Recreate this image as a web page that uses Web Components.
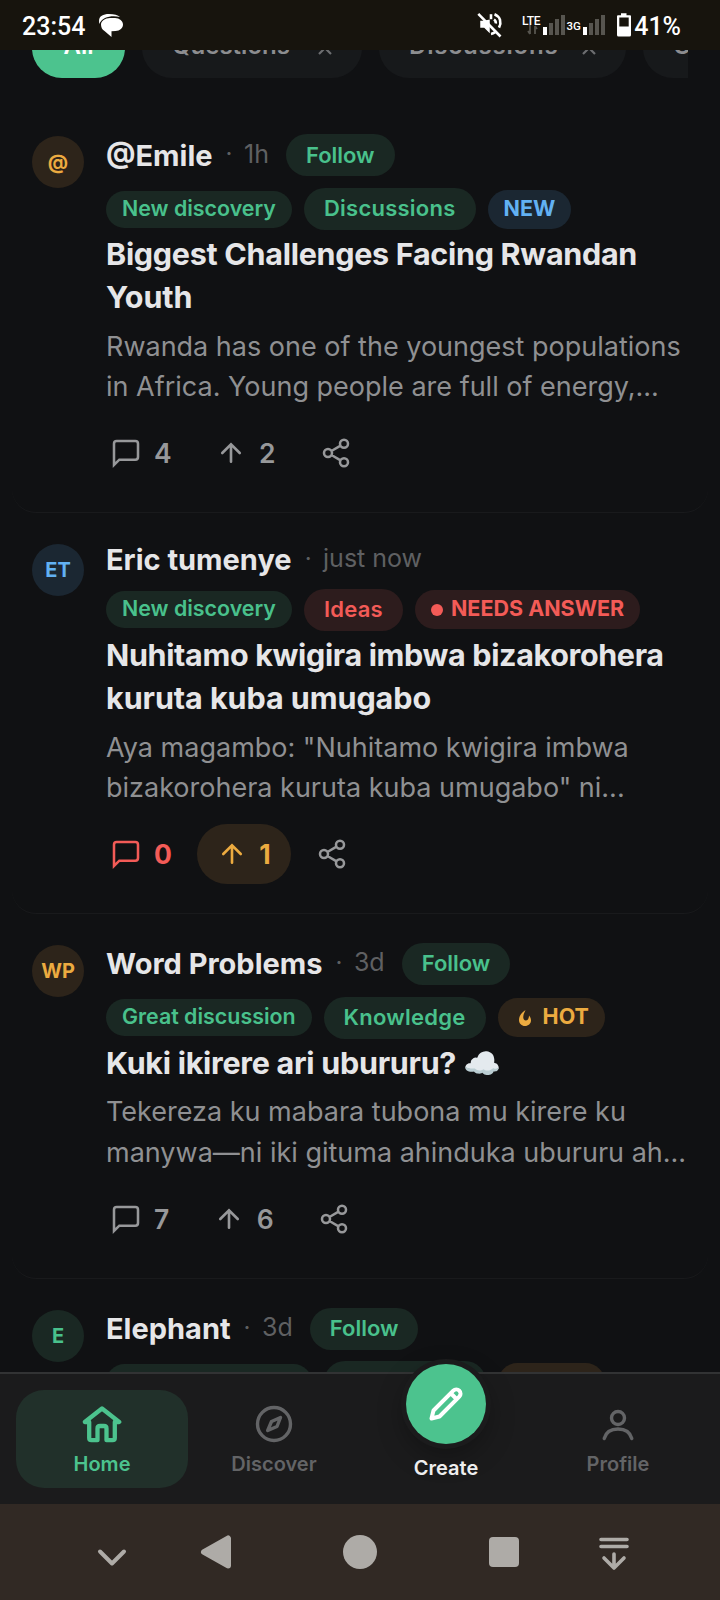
<!DOCTYPE html>
<html lang="rw">
<head>
<meta charset="utf-8">
<title>Community feed</title>
<style>
html,body{margin:0;background:#101113}
body{font-family:Inter,"Liberation Sans",sans-serif;color:#e6e6e8}
</style>
</head>
<body>
<app-shell>
  <status-bar slot="status" time="23:54" battery="41%"></status-bar>
  <chip-row>
    <filter-chip active style="width:93px">All</filter-chip>
    <filter-chip closable style="width:220px">Questions</filter-chip>
    <filter-chip closable style="width:247px;letter-spacing:.8px">Discussions</filter-chip>
    <filter-chip closable style="width:220px">Guides</filter-chip>
  </chip-row>
  <post-card initials="@" tone="amber" name="@Emile" time="1h" follow comments="4" votes="2">
    <tag-pill slot="tags" size="s">New discovery</tag-pill>
    <tag-pill slot="tags" size="l">Discussions</tag-pill>
    <tag-pill slot="tags" size="m" tone="blue">NEW</tag-pill>
    <span slot="title"><text-line track="-.29">Biggest Challenges Facing Rwandan</text-line><text-line track="-.1">Youth</text-line></span>
    <span slot="excerpt"><text-line>Rwanda has one of the youngest populations</text-line><text-line>in Africa. Young people are full of energy,...</text-line></span>
  </post-card>
  <post-card initials="ET" tone="blue" name="Eric tumenye" time="just now" comments="0" votes="1" urgent voted>
    <tag-pill slot="tags" size="s">New discovery</tag-pill>
    <tag-pill slot="tags" size="l" tone="red">Ideas</tag-pill>
    <tag-pill slot="tags" size="m" tone="red" icon="dot">NEEDS ANSWER</tag-pill>
    <span slot="title"><text-line track="-.35">Nuhitamo kwigira imbwa bizakorohera</text-line><text-line track="-.06">kuruta kuba umugabo</text-line></span>
    <span slot="excerpt"><text-line>Aya magambo: "Nuhitamo kwigira imbwa</text-line><text-line>bizakorohera kuruta kuba umugabo" ni...</text-line></span>
  </post-card>
  <post-card initials="WP" tone="amber" name="Word Problems" time="3d" follow comments="7" votes="6">
    <tag-pill slot="tags" size="s">Great discussion</tag-pill>
    <tag-pill slot="tags" size="l">Knowledge</tag-pill>
    <tag-pill slot="tags" size="m" tone="amber" icon="flame">HOT</tag-pill>
    <span slot="title"><text-line track="-.28">Kuki ikirere ari ubururu? ☁️</text-line></span>
    <span slot="excerpt"><text-line>Tekereza ku mabara tubona mu kirere ku</text-line><text-line>manywa—ni iki gituma ahinduka ubururu ah...</text-line></span>
  </post-card>
  <post-card initials="E" tone="green" name="Elephant" time="3d" follow comments="5" votes="3">
    <tag-pill slot="tags" size="s">Great discussion</tag-pill>
    <tag-pill slot="tags" size="l">Knowledge</tag-pill>
    <tag-pill slot="tags" size="m" tone="amber" icon="flame">HOT</tag-pill>
  </post-card>
  <bottom-nav slot="nav"></bottom-nav>
  <system-bar slot="system"></system-bar>
</app-shell>
<script>
const define=(name,html,setup)=>{
  const t=document.createElement('template');t.innerHTML=html;
  customElements.define(name,class extends HTMLElement{
    constructor(){super();this.attachShadow({mode:'open'}).append(t.content.cloneNode(true));}
    connectedCallback(){if(setup)setup(this,this.shadowRoot,n=>this.getAttribute(n));}
  });
};

define('app-shell',`<style>
:host{display:flex;flex-direction:column;width:720px;height:1600px;overflow:hidden;background:#101113}
main{flex:1;min-height:0;overflow:hidden}
</style><slot name="status"></slot><main><slot></slot></main><slot name="nav"></slot><slot name="system"></slot>`);

define('status-bar',`<style>
:host{display:flex;align-items:center;height:50px;box-sizing:border-box;padding:3px 39px 0 22px;background:#17140d;color:#fff;font:500 25px/50px Roboto,sans-serif;flex:none}
#b{margin:-2px 0 0 13px}.sp{flex:1}
svg{display:block;flex:none}
#s{margin-top:-5px}#p{margin-left:-23px}
</style><span id="t"></span>
<svg id="b" width="26" height="26" viewBox="0 0 26 26"><path fill="#fff" d="M1.500 11C-.5 4 4 1 11 1c5 0 9 1 11 3-5-1.500-11-1-15 1-3 1.500-5 3.500-5.500 6z"/><path fill="#fff" d="M12 5h5c4.500 0 8 3 8 6.500S22 18 17.500 18l-4 0.300 0 5.700L6.500 18C4 16.500 3 14 3 11.500 3 8 7 5 12 5z"/></svg>
<span class="sp"></span>
<svg id="s" width="180" height="30" viewBox="0 0 180 30" fill="none">
 <g stroke="#fff" stroke-width="2.600"><path d="M1.300 4.800 23.500 27.500"/><path fill="#fff" d="M4 12.500h3l5-1v11l-4.500-4.500H4z" stroke-width="1.500"/><path d="M14 5.200v5"/><path d="M17.500 5.200c6 2.500 7.200 8.300 4.500 13.500"/><path d="M14 25c1.500-.300 3-1 4.200-1.800"/><path d="M17 10.500c1.500 1 2 2.500 1.800 4"/></g>
 <text x="45" y="16" font-family="Roboto" font-weight="500" font-size="12" textLength="18.500" fill="#fff">LTE</text>
 <path d="M53 16v9M51 22l2 3M58 25v-8M60 20l-2-3" stroke="#57554f" stroke-width="1.800"/>
 <rect x="66" y="18" width="4" height="8" fill="#fff"/><g fill="#57554f"><rect x="72" y="14" width="4" height="12"/><rect x="78" y="10" width="4" height="16"/><rect x="84" y="6" width="4" height="20"/></g>
 <text x="89.500" y="21" font-family="Roboto" font-weight="500" font-size="11.500" fill="#fff">3G</text>
 <rect x="106" y="18" width="4" height="8" fill="#fff"/><g fill="#57554f"><rect x="112" y="14" width="4" height="12"/><rect x="118" y="10" width="4" height="16"/><rect x="124" y="6" width="4" height="20"/></g>
 <path fill="#fff" fill-rule="evenodd" d="M144 4.300h5.500v2h3.500q1 0 1 1V26q0 1.500-1.500 1.500h-11q-1.500 0-1.500-1.500V7.300q0-1 1-1H144zM142.300 8.500v9h9.400v-9z"/>
</svg><span id="p"></span>`,(el,r,a)=>{r.getElementById('t').textContent=a('time');r.getElementById('p').textContent=a('battery');});

define('chip-row',`<style>
:host{display:flex;gap:17px;margin:-32px 32px 27.400px;overflow:hidden;height:60px}
</style><slot></slot>`);
define('filter-chip',`<style>
:host{display:flex;flex:none;box-sizing:border-box;justify-content:center;align-items:center;height:60px;border-radius:30px;background:#17191b;color:#8c8d90;font-weight:600;font-size:24px;padding-bottom:5px}
:host([active]){background:#4cc38e;color:#fff}
svg{display:none}:host([closable]) svg{display:block;margin-top:4px}
:host([closable]){justify-content:space-between;padding-left:30px;padding-right:30px}
</style><slot></slot><svg width="14" height="14" viewBox="0 0 14 14" stroke="#6c6d70" stroke-width="2.200"><path d="M1 1l12 12M13 1 1 13"/></svg>`);

define('text-line',`<style>:host{display:block;white-space:nowrap}</style><slot></slot>`,(el,r,a)=>{if(a('track'))el.style.letterSpacing=a('track')+'px';});

define('tag-pill',`<style>
:host{display:inline-flex;align-items:center;box-sizing:border-box;border-radius:21px;background:#1a2823;color:#49c18c;font-weight:600;font-size:22px;white-space:nowrap;flex:none}
:host([size=s]){height:37px;padding:0 16px 3px;font-size:21.400px}
:host([size=m]){height:39px;padding:0 16px 3px;font-weight:700;font-size:21.500px}
:host([size=l]){height:42px;padding:0 20px 1.500px;letter-spacing:.25px}
:host([plain]){letter-spacing:0}
:host([tone=blue]){background:#1b2732;color:#62b1f3}
:host([tone=red]){background:#2d1c1d;color:#f35b57}
:host([tone=amber]){background:#2d241a;color:#ecab40}
svg{display:none;flex:none}
:host([icon=dot]) .dot,:host([icon=flame]) .flame{display:block}
.dot{margin:3px 8px 0 0}.flame{margin:3px 9px 0 2px}
</style><svg class="dot" width="12" height="12"><circle cx="6" cy="6" r="6" fill="currentColor"/></svg>
<svg class="flame" width="18" height="18" viewBox="0 0 18 18"><path fill="currentColor" d="M9.500 1C4.500 4 3 8 3 11c0 3.500 2.700 6 6 6s6-2.500 6-5.500c0-2-.8-3.700-2-5 0 3.500-1.500 5-3.200 5C8 11.500 7 10 7.300 7.500 7.500 5 8.500 3.500 9.500 1z"/></svg><slot></slot>`);

define('user-avatar',`<style>
:host{display:flex;flex:none;width:52px;height:52px;border-radius:50%;align-items:center;justify-content:center;font-weight:700;font-size:20px;background:#1a2823;color:#49c18c}
:host([tone=blue]){background:#1b2732;color:#62b1f3}
:host([tone=amber]){background:#2d241a;color:#ecab40}
</style><slot></slot>`);

const paths={
 comment:'M21 15a2 2 0 0 1-2 2H7l-4 4V5a2 2 0 0 1 2-2h14a2 2 0 0 1 2 2z',
 up:'M12 19V5M5 12l7-7 7 7',
 share:'M8.600 13.500l6.800 4M15.400 6.500l-6.800 4M18 8a3 3 0 1 0 0-6 3 3 0 0 0 0 6zM6 15a3 3 0 1 0 0-6 3 3 0 0 0 0 6zM18 22a3 3 0 1 0 0-6 3 3 0 0 0 0 6z'
};
define('action-button',`<style>
:host{display:flex;align-items:center;box-sizing:border-box;height:60px;padding:0 20px;border-radius:30px;gap:12px;color:#97989a;font-weight:600;font-size:26.500px;flex:none}
:host([tone=red]){color:#f35b57;font-weight:700}
:host([tone=amber]){background:#2d241a;color:#ecab40;font-weight:700}
:host([icon=up]){gap:12.600px}
svg{display:block}
</style><svg viewBox="0 0 24 24" fill="none" stroke="currentColor" stroke-width="1.900"><path/></svg><slot></slot>`,(el,r,a)=>{
 const s=r.querySelector('svg'),k=a('icon'),z=k==='up'?30:32;
 s.setAttribute('width',z);s.setAttribute('height',z);
 r.querySelector('path').setAttribute('d',paths[k]);
 if(k==='up'){s.setAttribute('stroke-linecap','round');s.setAttribute('stroke-width','2.100');}
});

define('post-card',`<style>
:host{display:flex;gap:22px;box-sizing:border-box;margin:0 12px;padding:29px 20px;border-bottom:1px solid #191a1c;border-radius:24px}
user-avatar{margin-top:2px}
.c{flex:1;min-width:0}
.n{display:flex;align-items:center;min-height:35px}
b{font-weight:700;font-size:29px;line-height:35px}
.d{color:#5f6062;font-size:24px;margin:-3px 11px 0 13px}
.t{color:#5f6062;font-size:25px;margin:-3px 17px 0 .500px}
.tags{display:flex;align-items:center;gap:12px;margin-top:11.800px;height:42px}
.title{font-weight:700;font-size:30.500px;line-height:43.200px;margin-top:2px}
.ex{color:#8f9092;font-size:27px;line-height:40.300px;margin-top:8.500px}
.a{display:flex;gap:4.800px;margin:15.500px 0 0 -16px}
</style><user-avatar></user-avatar><div class="c">
<div class="n"><b></b><span class="d">·</span><span class="t"></span></div>
<div class="tags"><slot name="tags"></slot></div>
<div class="title"><slot name="title"></slot></div>
<div class="ex"><slot name="excerpt"></slot></div>
<div class="a"><action-button class="cm" icon="comment"></action-button><action-button class="up" icon="up"></action-button><action-button icon="share"></action-button></div>
</div>`,(el,r,a)=>{
 const q=s=>r.querySelector(s);
 const av=q('user-avatar');av.textContent=a('initials');av.setAttribute('tone',a('tone'));
 q('b').textContent=a('name');q('.t').textContent=a('time');
 q('.cm').append(a('comments'));q('.up').append(a('votes'));
 if(a('urgent')!==null)q('.cm').setAttribute('tone','red');
 if(a('voted')!==null)q('.up').setAttribute('tone','amber');
 if(a('follow')!==null){const f=document.createElement('tag-pill');f.setAttribute('size','l');f.setAttribute('plain','');f.textContent='Follow';q('.n').append(f);}
});

define('nav-item',`<style>
:host{display:flex;flex-direction:column;align-items:center;box-sizing:border-box;height:98px;border-radius:28px;padding-top:14px;font-weight:600;font-size:20px;color:#636466}
:host([active]){background:#21302a;color:#4cc38e}
.l{margin-top:7px;line-height:26px}
</style><slot name="icon"></slot><span class="l"><slot></slot></span>`);

define('bottom-nav',`<style>
:host{display:grid;grid-template-columns:repeat(4,172px);flex:none;box-sizing:border-box;height:132px;padding:16px 16px 0;border-top:2px solid #323334;background:#1b1b1c;position:relative;z-index:1}
svg{display:block;flex:none}
.create{display:flex;flex-direction:column;align-items:center;margin-top:-26px;font-weight:600;font-size:20px;color:#eee;line-height:26px}
.fab{display:flex;align-items:center;justify-content:center;width:80px;height:80px;border-radius:50%;background:#4cc38e;box-shadow:0 0 0 5px #1b1b1c,0 10px 28px rgba(0,0,0,.35);margin-bottom:11px}
</style>
<nav-item active><svg slot="icon" width="40" height="40" viewBox="0 0 40 40" fill="none" stroke="currentColor" stroke-width="4.300" stroke-linejoin="round" stroke-linecap="round"><path d="M7.200 18H2.800L20 4.500l17.200 13.500H32.800V34q0 2.200-2.200 2.200H24.500V24.500q0-2.500-2.500-2.500h-4q-2.500 0-2.500 2.500v11.700H9.400q-2.200 0-2.200-2.200z"/></svg>Home</nav-item>
<nav-item><svg slot="icon" width="40" height="40" viewBox="0 0 40 40" fill="none" stroke="currentColor" stroke-width="3.400" stroke-linejoin="round"><circle cx="20" cy="20" r="16.500"/><path d="M26.500 13.500 23 22.500 13.700 26.500 17.500 17.500z"/></svg>Discover</nav-item>
<div class="create"><span class="fab"><svg width="40" height="40" viewBox="0 0 40 40" fill="none" stroke="#fff" stroke-width="4" stroke-linejoin="round"><path d="M5.500 34.500l2-8L27.300 6.700a4.200 4.200 0 0 1 6 6L13.500 32.500zM25 9.500l5.500 5.500"/></svg></span>Create</div>
<nav-item><svg slot="icon" width="40" height="40" viewBox="0 0 40 40" fill="none" stroke="currentColor" stroke-width="3.400" stroke-linecap="round"><circle cx="20" cy="14" r="6.500"/><path d="M6.200 34.500C8 28 13 25 20 25s12 3 13.800 9.500"/></svg>Profile</nav-item>`);

define('system-bar',`<style>
:host{display:block;flex:none;height:96px;background:#312924}svg{display:block}
</style><svg width="720" height="96" viewBox="0 0 720 96" fill="#aeaba7" stroke="#aeaba7" stroke-linecap="round" stroke-linejoin="round">
<path fill="none" stroke-width="4" d="M100 47.500l12 12 12-12"/>
<path stroke-width="6" d="M228 34.500v27L204 48z"/>
<circle cx="360" cy="48" r="17" stroke="none"/>
<rect x="489" y="33" width="30" height="30" rx="4" stroke="none"/>
<path fill="none" stroke-width="3.600" d="M601 35.500h26M601 42.500h26M614 50v14M604 54l10 10 10-10"/></svg>`);
</script>
</body>
</html>
